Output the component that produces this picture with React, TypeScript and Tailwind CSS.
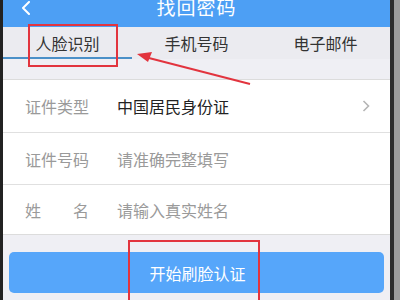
import React from "react";

export default function App() {
  const font = { fontFamily: '"Noto Sans CJK SC", "Noto Sans", sans-serif' };
  return (
    <div className="w-[400px] h-[300px] overflow-hidden flex relative bg-[#efeff4]" style={font}>
      <div className="w-[3px] h-full bg-[#222]" />
      <div className="w-[387px] h-full flex flex-col bg-[#efeff4]">
        {/* header */}
        <div className="h-[27px] bg-[#4d9ff4] relative flex justify-center overflow-hidden">
          <svg className="absolute left-[17px] top-[1px]" width="14" height="14" viewBox="0 0 14 14">
            <path d="M9 1 L3 7 L9 13" fill="none" stroke="#fff" strokeWidth="2" strokeLinecap="round" strokeLinejoin="round" />
          </svg>
          <div className="text-white text-[19px] leading-[20px] mt-[-3px] tracking-[1px]">找回密码</div>
        </div>
        {/* tabs */}
        <div className="h-[32px] bg-[#ebebf0] flex relative">
          <div className="w-[129px] flex items-center justify-center text-[16px] text-[#333] pt-[1px] border-b-[2px] border-[#4b90c8]">人脸识别</div>
          <div className="w-[129px] flex items-center justify-center text-[16px] text-[#333] pb-[1px]">手机号码</div>
          <div className="w-[129px] flex items-center justify-center text-[16px] text-[#333] pb-[1px]">电子邮件</div>
        </div>
        <div className="h-[21px] bg-[#efeff4] border-b border-[#dcdcdc]" />
        {/* form */}
        <div className="bg-white border-b border-[#dcdcdc]">
          <div className="h-[53px] flex items-center border-b border-[#e0e0e0] pl-[22px] pr-[20px]">
            <div className="w-[92px] text-[16px] text-[#9a9a9a]">证件类型</div>
            <div className="flex-1 text-[16px] text-[#222]">中国居民身份证</div>
            <svg width="8" height="12" viewBox="0 0 8 12">
              <path d="M1.5 1 L6.5 6 L1.5 11" fill="none" stroke="#b5b5b5" strokeWidth="1.6" />
            </svg>
          </div>
          <div className="h-[52px] flex items-center border-b border-[#e0e0e0] pl-[22px] pr-[20px]">
            <div className="w-[92px] text-[16px] text-[#9a9a9a]">证件号码</div>
            <div className="flex-1 text-[16px] text-[#9a9a9a]">请准确完整填写</div>
          </div>
          <div className="h-[49px] flex items-center pl-[22px] pr-[20px]">
            <div className="w-[92px] text-[16px] text-[#9a9a9a]">
              <div className="w-[64px] flex justify-between">
                <span>姓</span>
                <span>名</span>
              </div>
            </div>
            <div className="flex-1 text-[16px] text-[#9a9a9a]">请输入真实姓名</div>
          </div>
        </div>
        <div className="px-[6px] pt-[17px]">
          <div className="h-[41px] rounded-[5px] bg-[#56a6fa] flex items-center justify-center text-white text-[16px] pl-[2px]">开始刷脸认证</div>
        </div>
      </div>
      <div className="w-[4px] h-full bg-[#2c2c2c]" />
      <div className="w-[6px] h-full bg-[#9c9c9c]" />

      {/* annotations */}
      <div className="absolute left-[28px] top-[24px] w-[90px] h-[43px] border-2 border-[#e2343e]" />
      <div className="absolute left-[128px] top-[240px] w-[132px] h-[70px] border-2 border-[#e2343e]" />
      <svg className="absolute left-0 top-0" width="400" height="300" viewBox="0 0 400 300">
        <line x1="250" y1="84" x2="145" y2="57" stroke="#e2343e" strokeWidth="2" />
        <path d="M137 54 L152 52 L148 62 Z" fill="#e2343e" />
      </svg>
    </div>
  );
}
